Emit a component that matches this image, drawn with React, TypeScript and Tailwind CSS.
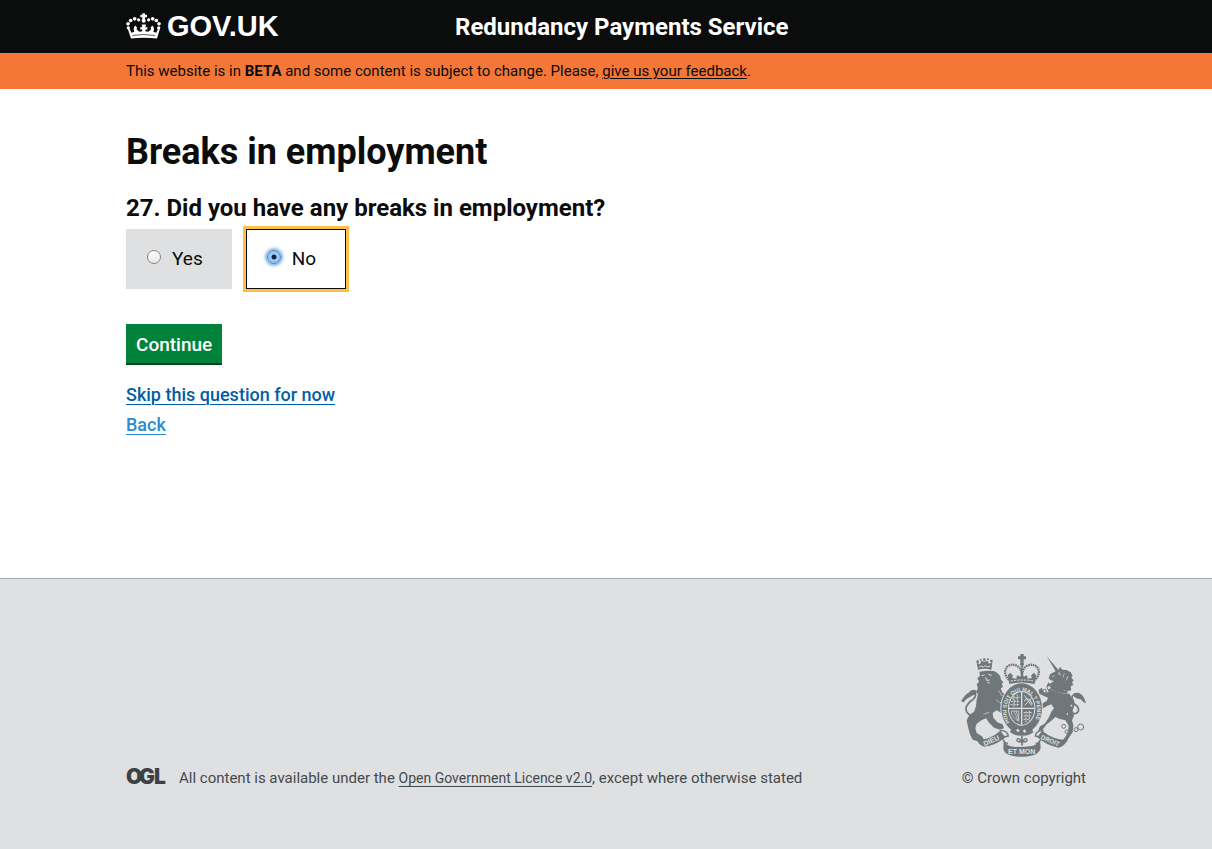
import { useState } from "react";

function Crown() {
  return (
    <svg viewBox="0 0 105 80" className="h-[27px] w-[35px]" fill="#fff" aria-hidden="true">
      <path d="M49 0h8v5h6v7h-6v8h-8v-8h-6V5h6z" />
      <circle cx="53" cy="23" r="6" />
      <circle cx="38" cy="20" r="5" />
      <circle cx="26" cy="17" r="5.5" />
      <circle cx="14" cy="22" r="5.5" />
      <circle cx="6" cy="32" r="5.5" />
      <circle cx="7" cy="44" r="5" />
      <circle cx="68" cy="20" r="5" />
      <circle cx="80" cy="17" r="5.5" />
      <circle cx="91" cy="22" r="5.5" />
      <circle cx="99" cy="32" r="5.5" />
      <circle cx="98" cy="44" r="5" />
      <path d="M5 46l7 3 4 10 9-3-2-6 1-8 4-5 5 6-1 6 8 7 9-2-1-6-5 2v-9l6 2-2-9h13l-2 9 6-2v9l-5-2-1 6 9 2 8-7-1-6 5-6 4 5 1 8-2 6 9 3 4-10 7-3-9 30Q53 72 15 76z" />
      <path d="M19 67Q53 61 87 67" fill="none" stroke="#0b0c0c" strokeWidth="2" />
    </svg>
  );
}

function OglMark() {
  return (
    <svg
      viewBox="0 -6 41 28"
      className="-mt-[5px] h-[28px] w-[41px] shrink-0 font-[Inter,sans-serif] text-[21px] font-black"
      fill="#3d4144"
      role="img"
      aria-label="OGL"
    >
      <text x="0 13 28" y="15">OGL</text>
    </svg>
  );
}

function RoyalArms() {
  const ink = "#6f777b";
  const paper = "#dee0e2";
  return (
    <svg
      viewBox="33 27 375 309"
      className="h-[103px] w-[125px] font-['Liberation_Sans',sans-serif] font-bold"
      fill={ink}
      role="img"
      aria-label="Royal coat of arms"
    >
      {/* tails */}
      <g fill="none" stroke={ink} strokeLinecap="round">
        <path d="M64 212Q46 204 48 188Q54 172 68 164Q80 154 76 144" strokeWidth="5" />
        <path d="M366 204Q382 210 386 196Q386 184 372 176Q362 164 368 152Q374 142 386 148" strokeWidth="5" />
      </g>
      <path d="M33 169Q44 149 56 143Q63 132 76 135Q82 141 76 149Q66 150 60 156Q50 159 41 172z" />
      <path d="M370 149Q382 139 392 147Q403 155 408 175Q398 172 392 163Q384 163 374 157z" />

      {/* lion */}
      <path d="M88 80L110 77 132 78 142 84 150 92 153 104 160 112 155 116 159 126 152 130 157 142 168 152 178 166 172 178 160 170 150 172 158 186 168 196 180 204 178 216 164 214 150 202 140 196 128 204 130 218 142 232 158 238 162 250 150 254 132 248 116 232 108 220 94 226 80 236 76 250 80 264 96 274 102 284 88 290 68 284 60 268 54 246 50 226 58 210 72 200 78 184 80 164 84 148 78 140 84 130 80 118 87 110 82 100 90 92z" />
      <path d="M84 74L80 53 90 58 94 47 103 50 112 47 117 56 127 51 124 74Q104 69 84 74z" />
      <circle cx="103" cy="44" r="4" />
      <circle cx="83" cy="50" r="4" />
      <circle cx="124" cy="48" r="4" />
      <circle cx="92" cy="44" r="3" />
      <circle cx="114" cy="43" r="3" />
      <g stroke={paper} strokeWidth="3" fill="none">
        <path d="M88 66l6-3 6 3 6-4 6 4 8-3" />
        <path d="M95 92l9-2M115 88l10 3M107 97l3 9 9-1M112 112l7 2" />
        <path d="M146 136l8 14 12 8M138 164l10 8M100 208l18-6" strokeWidth="2" />
      </g>

      {/* unicorn */}
      <path d="M290 34L325 74l-7 6z" />
      <path d="M300 88L318 78 326 74 330 65 337 74 350 75 362 82 368 92 364 98 371 106 366 112 370 120 362 124 364 134 354 140 362 152 372 166 374 180 368 196 372 212 366 226 370 240 368 262 358 276 350 290 334 292 344 278 354 262 356 242 346 226 330 222 316 216 306 226 290 238 278 254 264 258 270 244 284 236 296 218 304 200 312 190 304 178 292 182 280 190 268 180 262 166 270 160 276 176 290 168 294 158 280 152 268 146 266 134 276 128 280 142 296 142 292 130 298 118 312 108 302 106 296 100z" />
      <path d="M290 120Q322 141 356 142" fill="none" stroke={paper} strokeWidth="10" />
      <path d="M289 124l7-13 8 12 8-8 5 13 9-8 5 13 9-7 4 12 9-6-1 14Q315 146 289 124z" />
      <path d="M330 80l-5 7 8 2M306 95l8-3M343 85l-4 12M354 93l-5 13" fill="none" stroke={paper} strokeWidth="2" />
      <g fill={paper} stroke={ink} strokeWidth="3">
        <circle cx="297" cy="128" r="6" />
        <circle cx="284" cy="138" r="5" />
        <circle cx="341" cy="244" r="6" />
        <circle cx="350" cy="260" r="5" />
        <circle cx="378" cy="254" r="6" />
        <circle cx="392" cy="246" r="9" />
        <circle cx="364" cy="182" r="4" />
        <circle cx="352" cy="207" r="4" />
      </g>

      {/* crown */}
      <path d="M211 27h10v7h7v9h-7v9h-10v-9h-7v-9h7z" />
      <circle cx="216" cy="57" r="6" />
      <g fill="none" stroke={ink}>
        <path d="M177 105Q157 84 171 66Q184 54 202 63Q214 71 216 88Q218 71 230 63Q248 54 261 66Q275 84 255 105" strokeWidth="7" strokeDasharray="5 2" />
        <path d="M216 56v45" strokeWidth="7" strokeDasharray="5 2" />
      </g>
      <path d="M173 91l8-8 8 9-3 7 13 2 2-10 10 4 5-12 5 12 10-4 2 10 13-2-3-7 8-9 8 8-5 26Q216 108 178 117z" />
      <path d="M182 108q34-6 68 0" fill="none" stroke={paper} strokeWidth="3" strokeDasharray="7 3" />

      {/* garter and shield */}
      <ellipse cx="215" cy="190" rx="64" ry="77" fill={paper} />
      <ellipse cx="215" cy="190" rx="61" ry="75" />
      <ellipse cx="215" cy="190" rx="41" ry="52" fill={paper} />
      <ellipse cx="215" cy="190" rx="38" ry="49" />
      <path d="M215 141v98M177 190h76" stroke={paper} strokeWidth="4" />
      <g fill="none" stroke={paper} strokeWidth="3">
        <path d="M187 160l22-3M183 169h27M182 179h27M192 153v32M202 149v34" strokeDasharray="6 3" />
        <path d="M221 203h25M221 213h22M221 223h17M228 199v34M238 197v30" strokeDasharray="6 3" />
        <path d="M223 151l22 31M245 159l-21 22M222 168q15-17 25 10" />
        <path d="M184 198q-1 19 23 31M191 198l14 30M198 198l9 25M206 198v29M184 198h22" strokeWidth="2" />
      </g>
      <path id="garter" d="M180 234A46 58 0 1 1 252 232" fill="none" />
      <text fill={paper} fontSize="16">
        <textPath href="#garter" startOffset="2">HONI SOIT QUI MAL Y PENSE</textPath>
      </text>
      <path d="M186 246q29 20 58 0l6 16q-34 24-70 0z" />
      <path d="M198 256l6-5 5 6-5 5zM218 258l6-5 5 6-5 5z" fill={paper} />

      {/* motto ribbon */}
      <path d="M81 284q37 2 70-27l15 20q-30 26-63 28-17-4-22-21z" />
      <path d="M352 284q-40 2-76-27l-14 20q30 26 63 31 20-5 27-24z" />
      <path d="M149 257q24-1 26 16-17 2-16 11 4 9 15 12M281 257q-23-1-25 16 17 2 16 11-4 9-15 12" fill="none" stroke={ink} strokeWidth="4" />
      <path d="M161 284q8 20 31 21 25 2 47-1 23-3 31-20l2 26q-5 20-36 24-22 3-43 0-29-4-33-22z" />
      <path d="M190 272h52v30h-52z" fill={paper} />
      <g fill="none" stroke={ink} strokeWidth="5" strokeLinecap="round">
        <path d="M216 274v26M206 290h20" />
        <path d="M213 289q-3-9-9-8-5 3-2 8M219 289q3-9 9-8 5 3 2 8" strokeWidth="4" />
      </g>
      <g fill={paper} fontSize="21">
        <text x="104" y="304" transform="rotate(-25 104 304)">DIEU</text>
        <text x="174" y="327">ET MON</text>
        <text x="271" y="281" fontSize="19" transform="rotate(24 271 281)">DROIT</text>
      </g>
    </svg>
  );
}

const answers = ["Yes", "No"];

export default function App() {
  const [answer, setAnswer] = useState("No");

  return (
    <div className="flex min-h-screen flex-col bg-white font-[Roboto,sans-serif] text-[#0b0c0c]">
      <header className="bg-[#0b0c0c] px-4 text-white">
        <div className="mx-auto flex h-[53px] max-w-[960px] items-center">
          <a
            href="#home"
            className="flex w-[329px] items-center gap-[6px] font-['Liberation_Sans',sans-serif] text-[29px] leading-none font-bold"
          >
            <Crown />
            GOV.UK
          </a>
          <a href="#service" className="text-[24px] leading-[30px] font-bold">
            Redundancy Payments Service
          </a>
        </div>
      </header>

      <div className="bg-[#f47738] px-4">
        <p className="mx-auto max-w-[960px] py-2 text-[15px] leading-5">
          This website is in <strong>BETA</strong> and some content is subject to change. Please,{" "}
          <a href="#feedback" className="underline underline-offset-2">give us your feedback</a>.
        </p>
      </div>

      <main className="grow px-4">
        <form className="mx-auto max-w-[960px] pt-10" onSubmit={(e) => e.preventDefault()}>
          <h1 className="text-[36px] leading-[46px] font-bold">Breaks in employment</h1>
          <fieldset className="mt-[18px]">
            <legend className="text-[24px] leading-[30px] font-bold">
              27. Did you have any breaks in employment?
            </legend>
            <div className="flex gap-[14px] pt-[6px]">
              {answers.map((a) => (
                <label
                  key={a}
                  className="flex h-[60px] cursor-pointer items-center gap-[11px] bg-[#dee0e2] pr-[29px] pl-[21px] text-[19px] leading-6 has-checked:border has-checked:border-[#0b0c0c] has-checked:bg-white has-checked:pl-5 has-checked:outline-3 has-checked:outline-[#ffbf47]"
                >
                  <input
                    type="radio"
                    name="breaks"
                    value={a}
                    checked={answer === a}
                    onChange={() => setAnswer(a)}
                    className="mb-1 size-[14px] appearance-none rounded-full border border-[#858585] bg-linear-to-b from-white to-[#e8e8e8] checked:border-[#4a83c4] checked:bg-[radial-gradient(circle,#10243c_2px,#a5d0f7_3px,#8fc0f0_6px)] checked:shadow-[0_0_3px_2px_#7db4ea] focus:outline-none"
                  />
                  {a}
                </label>
              ))}
            </div>
          </fieldset>

          <button
            type="submit"
            className="mt-[35px] block h-[41px] border-b-2 border-[#00441f] bg-[#00823b] px-[10px] pt-[2px] text-[19px] leading-6 font-medium text-white"
          >
            Continue
          </button>
          <div className="flex flex-col items-start pt-[15px] text-[18px] leading-[30px] font-medium">
            <a href="#skip" className="text-[#005ea5] underline decoration-1 underline-offset-3">
              Skip this question for now
            </a>
            <a href="#back" className="text-[#2e8aca] underline decoration-1 underline-offset-3">
              Back
            </a>
          </div>
        </form>
      </main>

      <footer className="border-t border-[#a1acb2] bg-[#dee0e2] px-4 pt-[75px] pb-[61px] text-[15px] leading-5 text-[#454a4d]">
        <div className="mx-auto flex max-w-[960px] items-end justify-between">
          <div className="flex h-5 items-start gap-3">
            <OglMark />
            <p>
              All content is available under the{" "}
              <a href="#licence" className="text-[14px] underline underline-offset-3">
                Open Government Licence v2.0
              </a>
              , except where otherwise stated
            </p>
          </div>
          <a href="#copyright" className="flex flex-col items-end gap-[11px]">
            <RoyalArms />
            © Crown copyright
          </a>
        </div>
      </footer>
    </div>
  );
}
